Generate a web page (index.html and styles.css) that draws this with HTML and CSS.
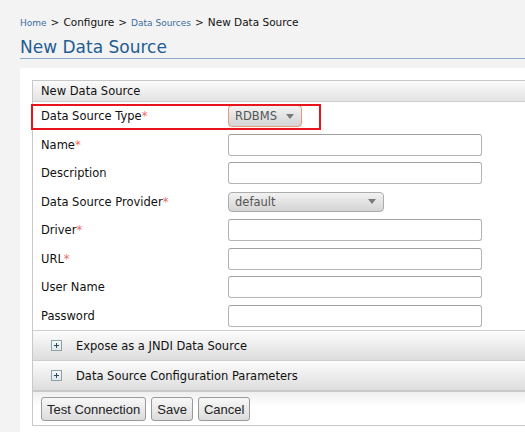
FILE: index.html
```html
<!DOCTYPE html>
<html>
<head>
<meta charset="utf-8">
<link rel="stylesheet" href="styles.css">
</head>
<body>
<div class="page">
  <div class="breadcrumb">
    <a class="crumb-link">Home</a><span class="sep">&gt;</span><span class="crumb">Configure</span><span class="sep">&gt;</span><a class="crumb-link">Data Sources</a><span class="sep">&gt;</span><span class="crumb">New Data Source</span>
  </div>
  <h2 class="title">New Data Source</h2>
  <div class="content">
    <div class="box">
      <div class="box-header">New Data Source</div>
      <div class="form">
        <div class="row highlighted">
          <div class="label">Data Source Type<span class="req">*</span></div>
          <div class="field"><div class="select select-focus select-type"><span>RDBMS</span><i class="arrow"></i></div></div>
        </div>
        <div class="row">
          <div class="label">Name<span class="req">*</span></div>
          <div class="field"><div class="input"></div></div>
        </div>
        <div class="row">
          <div class="label">Description</div>
          <div class="field"><div class="input"></div></div>
        </div>
        <div class="row">
          <div class="label">Data Source Provider<span class="req">*</span></div>
          <div class="field"><div class="select select-provider"><span>default</span><i class="arrow"></i></div></div>
        </div>
        <div class="row">
          <div class="label">Driver<span class="req">*</span></div>
          <div class="field"><div class="input"></div></div>
        </div>
        <div class="row">
          <div class="label">URL<span class="req">*</span></div>
          <div class="field"><div class="input"></div></div>
        </div>
        <div class="row">
          <div class="label">User Name</div>
          <div class="field"><div class="input"></div></div>
        </div>
        <div class="row">
          <div class="label">Password</div>
          <div class="field"><div class="input"></div></div>
        </div>
      </div>
      <div class="expander">
        <span class="plus"></span><span>Expose as a JNDI Data Source</span>
      </div>
      <div class="expander expander-last">
        <span class="plus"></span><span>Data Source Configuration Parameters</span>
      </div>
      <div class="buttons">
        <button class="btn">Test Connection</button>
        <button class="btn">Save</button>
        <button class="btn">Cancel</button>
      </div>
    </div>
  </div>
</div>
</body>
</html>
```

FILE: styles.css
```css
html, body {
  margin: 0;
  padding: 0;
  background: #f3f3f3;
  height: 100%;
  overflow: hidden;
}

.page {
  padding: 15px 0 0 20px;
  font-family: "DejaVu Sans", Verdana, sans-serif;
  color: #111;
}

.breadcrumb {
  height: 14px;
  line-height: 14px;
  font-size: 10.5px;
  display: flex;
  align-items: baseline;
}

.crumb-link {
  color: #3b6da0;
  font-size: 9px;
}

.crumb {
  color: #111;
}

.sep {
  margin: 0 4px;
  color: #222;
}

.title {
  margin: 8px 0 0 0;
  font-size: 17px;
  line-height: 20px;
  font-weight: normal;
  color: #1f5d92;
  padding-bottom: 1px;
  border-bottom: 1px solid #8fa9cd;
}

.content {
  margin-top: 9px;
  background: #fff;
  padding: 12px 0 0 12px;
  height: 364px;
  box-sizing: border-box;
  overflow: hidden;
}

.box {
  border: 1px solid #c8c8c8;
  border-right: none;
}

.box-header {
  height: 20px;
  line-height: 20px;
  padding-left: 8px;
  font-size: 11.5px;
  color: #111;
  background: linear-gradient(#fbfbfb, #e3e3e3);
  border-bottom: 1px solid #cfcfcf;
}

.form {
  display: grid;
  grid-auto-rows: 28.5px;
}

.row {
  display: grid;
  grid-template-columns: 195px 1fr;
  align-items: center;
  position: relative;
}

.highlighted::after {
  content: "";
  position: absolute;
  left: -2px;
  top: 2px;
  width: 290px;
  height: 26px;
  box-sizing: border-box;
  border: 2px solid #e8141b;
}

.label {
  padding-left: 8px;
  font-size: 11.5px;
  color: #111;
}

.req {
  color: #f06a6a;
}

.field {
  display: flex;
  align-items: center;
}

.input {
  width: 254px;
  height: 22px;
  box-sizing: border-box;
  border: 1px solid #b4b4b4;
  border-top-color: #a0a0a0;
  border-radius: 3px;
  background: #fff;
}

.select {
  box-sizing: border-box;
  display: flex;
  align-items: center;
  justify-content: space-between;
  padding: 0 7px 0 6px;
  border-radius: 4px;
  background: linear-gradient(#f2f2f2, #d4d4d4);
  font-size: 11.5px;
  color: #555;
}

.select-type {
  width: 74px;
  height: 22px;
  border: 1px solid #e29c7c;
  box-shadow: 0 0 1px #f0c0a8;
}

.select-provider {
  width: 156px;
  height: 20px;
  border: 1px solid #acacac;
}

.arrow {
  width: 0;
  height: 0;
  border-left: 4px solid transparent;
  border-right: 4px solid transparent;
  border-top: 5px solid #7a7a7a;
}

.expander {
  height: 29px;
  border-top: 1px solid #cfcfcf;
  display: flex;
  align-items: center;
  padding-left: 18px;
  font-size: 11.5px;
  color: #111;
  background: linear-gradient(#fcfcfc, #dddddd);
}

.expander-last {
  border-bottom: 2px solid #c9c9c9;
}

.plus {
  width: 9px;
  height: 9px;
  border: 1px solid #8ba3a8;
  background: linear-gradient(#f4f8f8, #dfe7e8);
  margin-right: 14px;
  position: relative;
}

.plus::before,
.plus::after {
  content: "";
  position: absolute;
  background: #2d4a5a;
}

.plus::before {
  left: 2px;
  top: 4px;
  width: 5px;
  height: 1px;
}

.plus::after {
  left: 4px;
  top: 2px;
  width: 1px;
  height: 5px;
}

.buttons {
  display: flex;
  gap: 5px;
  padding: 5px 0 4px 8px;
  background: linear-gradient(#efefef, #ffffff 14px);
}

.btn {
  font-family: "Liberation Sans", Arial, sans-serif;
  font-size: 13px;
  color: #222;
  height: 24px;
  padding: 0 5px;
  border: 1px solid #9a9a9a;
  border-radius: 3px;
  background: linear-gradient(#f8f8f8, #dcdcdc);
  margin: 0;
}
```
